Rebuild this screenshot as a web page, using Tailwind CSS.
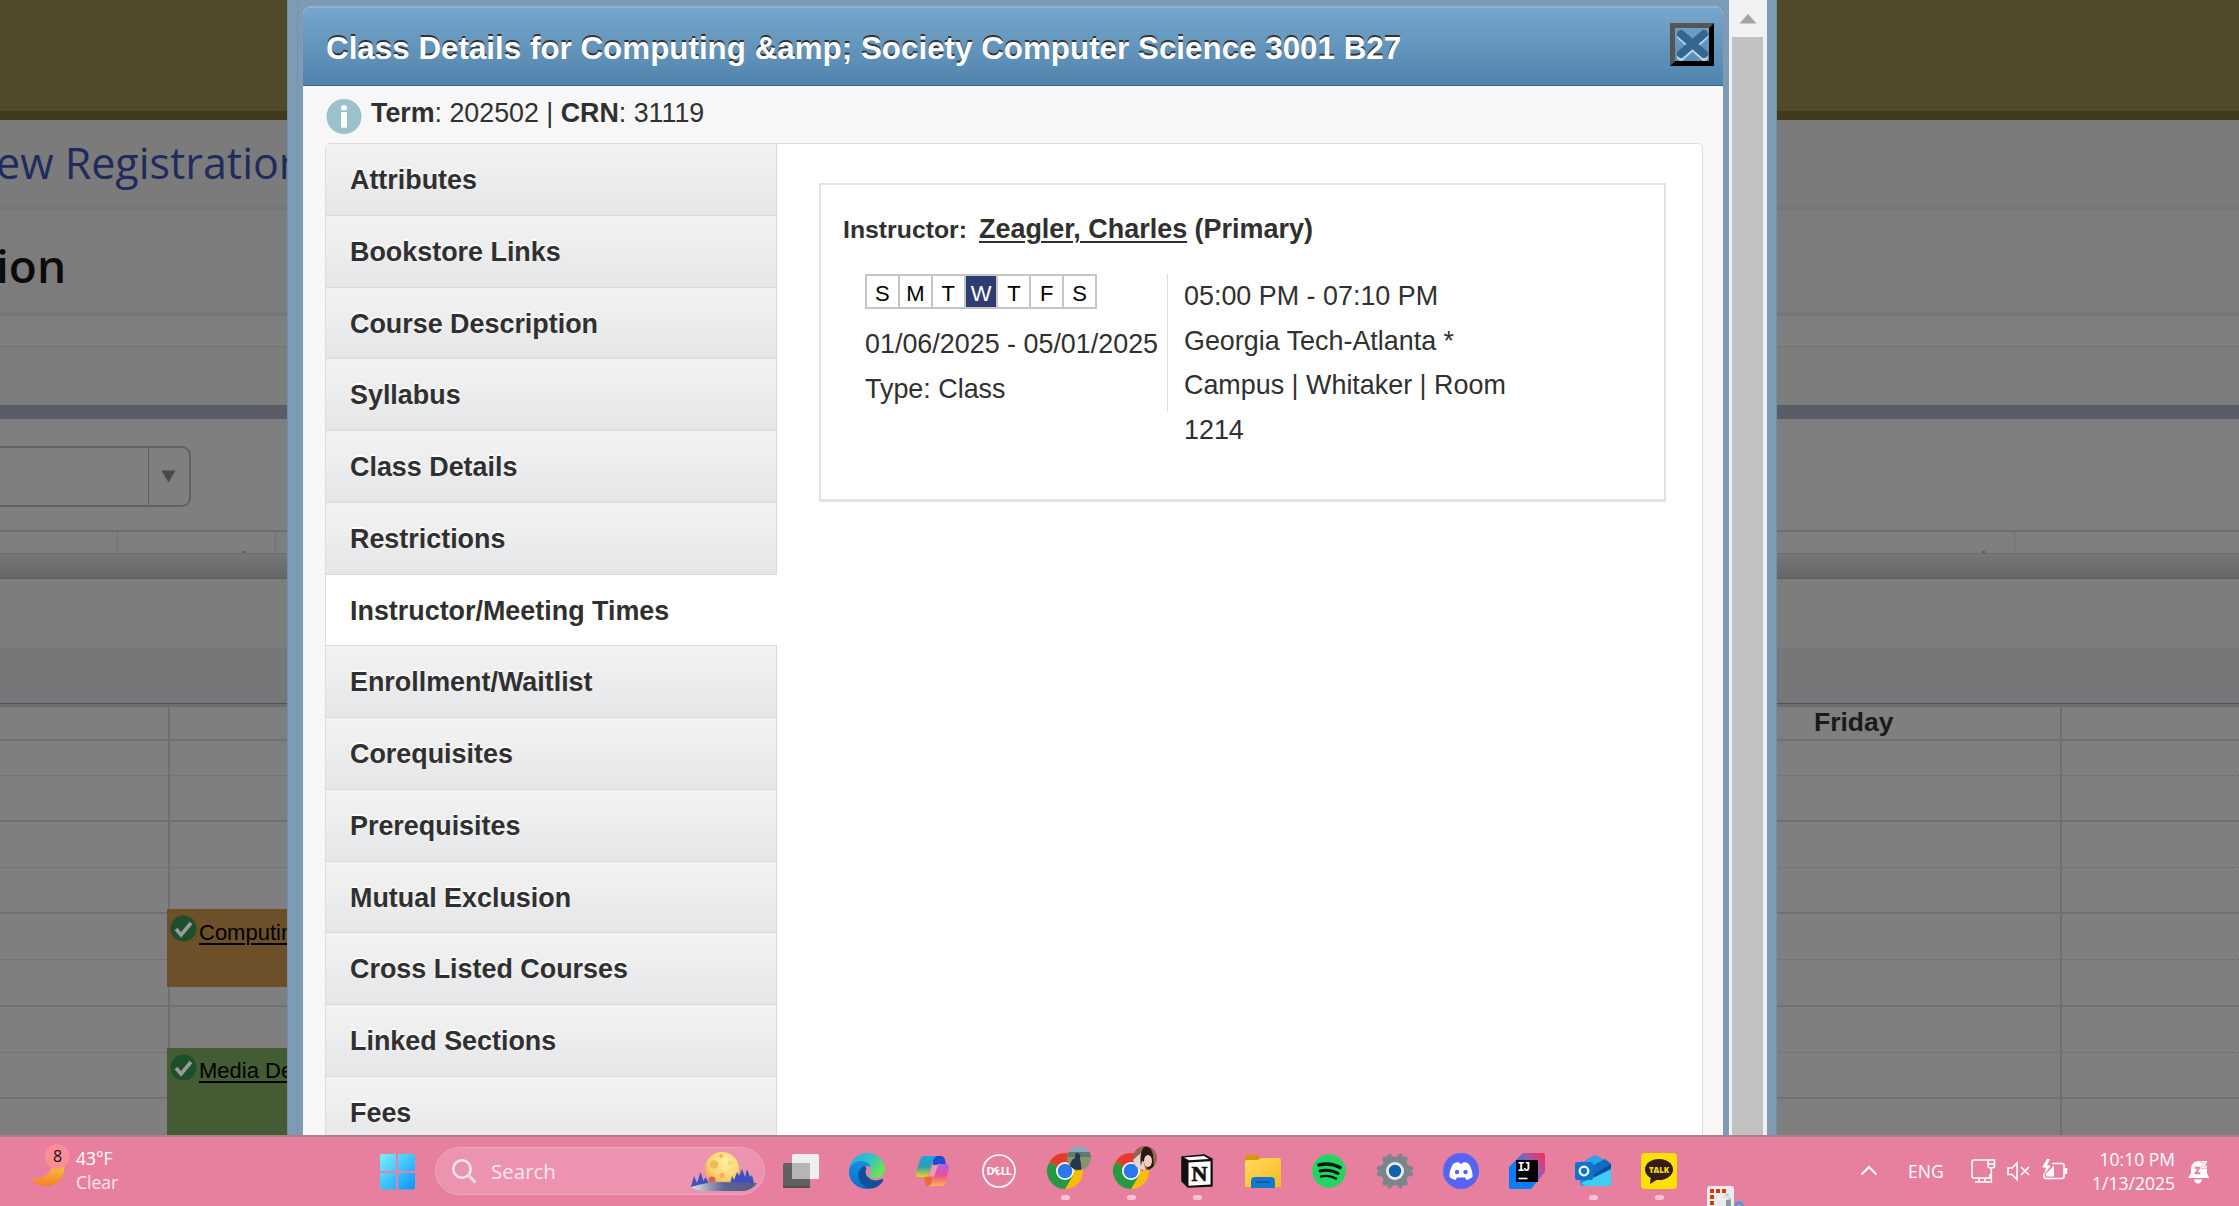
<!DOCTYPE html>
<html lang="en">
<head>
<meta charset="utf-8">
<title>Class Details</title>
<script src="https://cdn.jsdelivr.net/npm/@tailwindcss/browser@4"></script>
</head>
<body class="relative w-[2239px] h-[1206px] overflow-hidden bg-[#7f7f7f] font-['Liberation_Sans',sans-serif] text-[27px] text-[#303030]">

<!-- dimmed registration page -->
<div class="h-[1135px] flex flex-col overflow-hidden">
  <div class="h-[120px] shrink-0 bg-[#50492c] border-b-[9px] border-[#40391b]"></div>
  <div class="h-[90px] shrink-0 bg-[#7b7b7b] border-b-4 border-[#777777] font-['Open_Sans',sans-serif] text-[43px] leading-[86px] text-[#1f2b5c] whitespace-nowrap"><span class="block ml-[-4px]">ew Registration</span></div>
  <div class="h-[106px] shrink-0 bg-[#7c7c7c] border-b-4 border-[#777777] font-['Open_Sans',sans-serif] font-semibold text-[46px] leading-[110px] text-[#0b0b0b] whitespace-nowrap"><span class="block ml-[-4px]">ion</span></div>
  <div class="h-[31px] shrink-0 border-b border-[#747474]"></div>
  <div class="h-[58px] shrink-0 bg-[#7b7e7b]"></div>
  <div class="h-[14px] shrink-0 bg-[#595d66]"></div>
  <div class="h-[111px] shrink-0 pt-[27px]">
    <div class="w-[191px] h-[61px] flex border-2 border-l-0 border-[#616161] rounded-r-[9px]">
      <div class="w-[149px] border-r border-[#616161]"></div>
      <svg class="w-[40px] h-[57px]" viewBox="0 0 40 57"><path d="M12.500 22.500h14l-7 12z" fill="#4a4a4a"/></svg>
    </div>
  </div>
  <div class="h-[24px] shrink-0 grid grid-cols-[118px_158px_1739px_1fr] border-t-2 border-[#6d6d6d] border-b border-b-[#6d6d6d]">
    <div class="border-r border-[#727272]"></div>
    <div class="border-r border-[#727272] flex items-end justify-end pr-[29px]"><i class="w-[3px] h-[2px] bg-[#5c5c5c]"></i></div>
    <div class="border-r border-[#727272] flex items-end justify-end pr-[29px]"><i class="w-[3px] h-[2px] bg-[#5c5c5c]"></i></div>
    <div></div>
  </div>
  <div class="h-[25px] shrink-0 bg-gradient-to-b from-[#777777] to-[#656565] border-b border-[#5c5c5c]"></div>
  <div class="h-[69px] shrink-0 bg-[#7b7e7b]"></div>
  <div class="h-[56px] shrink-0 bg-[#767779] border-b border-[#505154]"></div>
  <div class="h-[3px] shrink-0 bg-[#6e6e6e]"></div>
  <!-- weekly calendar: hour rows end in a solid line, half hours in a dotted one -->
  <div class="shrink-0 grid grid-rows-[34px_35px_46px_46px_46px_46px_47px_46px_46px_46px] [&>div]:grid [&>div]:grid-cols-[170px_1892px_1fr] [&>div:nth-child(odd)]:border-b-2 [&>div]:border-[#707070] [&>div:nth-child(even)]:[border-bottom:1px_dotted_#6a6a6a]">
    <div><span class="border-r-2 border-[#6f6f6f]"></span><span class="border-r-2 border-[#6f6f6f] pl-[1644px] leading-[30px] font-bold text-[26.500px] text-[#1a1a1a]">Friday</span></div>
    <div><span class="border-r-2 border-[#6f6f6f]"></span><span class="border-r-2 border-[#6f6f6f]"></span></div>
    <div><span class="border-r-2 border-[#6f6f6f]"></span><span class="border-r-2 border-[#6f6f6f]"></span></div>
    <div><span class="border-r-2 border-[#6f6f6f]"></span><span class="border-r-2 border-[#6f6f6f]"></span></div>
    <div><span class="border-r-2 border-[#6f6f6f]"></span><span class="border-r-2 border-[#6f6f6f]"></span></div>
    <div><span class="border-r-2 border-[#6f6f6f]"></span><span class="border-r-2 border-[#6f6f6f]"></span></div>
    <div><span class="border-r-2 border-[#6f6f6f]"></span><span class="border-r-2 border-[#6f6f6f]"></span></div>
    <div><span class="border-r-2 border-[#6f6f6f]"></span><span class="border-r-2 border-[#6f6f6f]"></span></div>
    <div><span class="border-r-2 border-[#6f6f6f]"></span><span class="border-r-2 border-[#6f6f6f]"></span></div>
    <div><span class="border-r-2 border-[#6f6f6f]"></span><span class="border-r-2 border-[#6f6f6f]"></span></div>
  </div>
</div>

<!-- calendar events -->
<div class="absolute left-[167px] top-[909px] w-[300px] h-[78px] bg-[#6c5029] flex pl-[3px] text-[22px] text-black leading-[47px]">
  <svg class="w-[27px] h-[27px] mt-[6px] mr-[2px]" viewBox="0 0 27 27"><circle cx="13.500" cy="13.500" r="13" fill="#1d4f2a"/><path d="M6 14l5 6L21 8" fill="none" stroke="#9a9a9a" stroke-width="3.600"/></svg>
  <span class="underline underline-offset-3">Computing</span>
</div>
<div class="absolute left-[167px] top-[1048px] w-[300px] h-[87px] bg-[#445c33] flex pl-[3px] text-[22px] text-black leading-[45px]">
  <svg class="w-[27px] h-[27px] mt-[6px] mr-[2px]" viewBox="0 0 27 27"><circle cx="13.500" cy="13.500" r="13" fill="#1d4f2a"/><path d="M6 14l5 6L21 8" fill="none" stroke="#9a9a9a" stroke-width="3.600"/></svg>
  <span class="underline underline-offset-3">Media Design</span>
</div>

<!-- class details dialog -->
<div class="absolute left-[287px] top-0 w-[1490px] h-[1135px] overflow-hidden bg-[#7e9bb6] flex border-x border-[#728ea8]">
  <div class="w-[10px] shrink-0 border-r border-[#7490aa]"></div>
  <div class="ml-[5px] mt-[6px] w-[1420px] h-[1129px] shrink-0 bg-[#f7f7f7] rounded-t-[9px] overflow-hidden">
    <div class="h-[80px] flex justify-between pl-[23px] pr-[9px] bg-gradient-to-b from-[#77a6cb] to-[#5084ad] border-t-2 border-[#8bb3d2] border-b border-b-[#3f627f]">
      <h1 class="font-bold text-[31.370px] leading-[82px] text-white whitespace-nowrap [text-shadow:0_-2px_0_#333]">Class Details for Computing &amp;amp; Society Computer Science 3001 B27</h1>
      <svg class="w-[44px] h-[43px] mt-[15px]" viewBox="0 0 44 43"><g fill="none" stroke-linecap="round"><path d="M11 13.500L34 34M34 13.500L11 34" stroke="#b9d7ee" stroke-width="7.500"/><path d="M11 11L34 31M34 11L11 31" stroke="#34678f" stroke-width="8"/></g><path d="M0 0h44L39 5H5v33L0 43z" fill="#555"/><path d="M44 0v43H0l5-5h34V5z" fill="#000"/></svg>
    </div>
    <div class="h-[57px] flex pl-[23px] pt-[12px]">
      <svg class="w-[36px] h-[37px]" viewBox="0 0 37 37"><circle cx="18.500" cy="18.500" r="18" fill="#9cc1cb"/><rect x="15.500" y="7" width="6" height="5" rx="2" fill="#fff"/><rect x="15.500" y="14" width="6" height="16" rx="1" fill="#fff"/></svg>
      <p class="ml-[9px] text-[26.800px] leading-[30px]"><b>Term</b>: 202502 | <b>CRN</b>: 31119</p>
    </div>
    <div class="mr-[20px] ml-[22px] h-[1100px] flex bg-white border border-[#dcdcdc] rounded-[5px]">
      <nav class="w-[451px] shrink-0 font-bold text-[26.900px] leading-[72px] [&>a]:block [&>a]:h-[71.750px] [&>a]:pl-[24px] [&>a]:border-b [&>a]:border-r [&>a]:border-[#d9dada] [&>a]:bg-gradient-to-b [&>a]:from-[#f3f3f3] [&>a]:to-[#e5e6e8] [&>a]:[text-shadow:0_-2px_0_#fff]">
        <a>Attributes</a>
        <a>Bookstore Links</a>
        <a>Course Description</a>
        <a>Syllabus</a>
        <a>Class Details</a>
        <a>Restrictions</a>
        <div class="h-[71.750px] pl-[24px] bg-white border-b border-[#d9dada]">Instructor/Meeting Times</div>
        <a>Enrollment/Waitlist</a>
        <a>Corequisites</a>
        <a>Prerequisites</a>
        <a>Mutual Exclusion</a>
        <a>Cross Listed Courses</a>
        <a>Linked Sections</a>
        <a>Fees</a>
      </nav>
      <section class="ml-[42px] mt-[39px] w-[847px] h-[319px] border-2 border-b-3 border-[#e3e3e3]">
        <div class="pl-[22px] pt-[21px] flex items-baseline font-bold leading-[46px] whitespace-nowrap"><span class="text-[24.800px]">Instructor:</span><span class="ml-[12px] text-[26.950px]"><u class="underline-offset-3 decoration-2">Zeagler, Charles</u> (Primary)</span></div>
        <div class="pl-[44px] pt-[21px] flex leading-[44.700px]">
          <div class="w-[303px] h-[138px] border-r border-[#dcdcdc] whitespace-nowrap">
            <div class="w-[232px] h-[35px] flex border-2 border-[#c6c6c6] text-[22px] leading-[35px] text-black text-center [&>span]:flex-1 [&>span]:border-r-2 [&>span]:border-[#c6c6c6]">
              <span>S</span><span>M</span><span>T</span><span class="bg-[#2f3e72] text-white">W</span><span>T</span><span>F</span><b class="flex-1 font-normal">S</b>
            </div>
            <p class="mt-[13px] text-[26.900px]">01/06/2025 - 05/01/2025</p>
            <p class="text-[26.900px]">Type: Class</p>
          </div>
          <div class="ml-[16px] w-[340px] text-[26.900px]">05:00 PM - 07:10 PM<br>Georgia Tech-Atlanta *<br>Campus | Whitaker | Room<br>1214</div>
        </div>
      </section>
    </div>
  </div>
  <div class="ml-[6px] w-[38px] shrink-0 bg-[#f1f1f1] flex flex-col items-center">
    <svg class="w-[38px] h-[37px] shrink-0" viewBox="0 0 38 37"><path d="M10.500 23.500L19 14l8.500 9.500z" fill="#a3a3a3"/></svg>
    <div class="w-[31px] flex-1 bg-[#c1c1c1] mr-[1px]"></div>
  </div>
</div>

<!-- taskbar -->
<footer class="h-[71px] bg-[#e7809f] border-t-2 border-[#b67a8d] flex overflow-hidden font-['Open_Sans',sans-serif] text-white">
  <div class="w-[364px] shrink-0 flex">
    <svg class="w-[76px] h-[69px] shrink-0" viewBox="0 2 76 69"><defs><linearGradient id="mn" x2="0" y2="1"><stop stop-color="#f8c64a"/><stop offset="1" stop-color="#f57f1f"/></linearGradient></defs><path d="M31 43c9 3 19-2 22-14h11c2 12-6 22-17 22-8 0-14-4-16-8z" fill="url(#mn)"/><circle cx="57" cy="21.500" r="12.300" fill="#fd8e97"/><text x="57.500" y="27" text-anchor="middle" font-size="16" fill="#111">8</text></svg>
    <div class="pt-[9px] text-[17.500px] leading-[24px]"><p>43°F</p><p class="text-white/80">Clear</p></div>
  </div>
  <svg class="w-[71px] h-[69px] shrink-0" viewBox="364 1137 71 69"><defs><linearGradient id="w" gradientUnits="userSpaceOnUse" x1="380" y1="1154" x2="415" y2="1189"><stop stop-color="#7bf0ff"/><stop offset="1" stop-color="#0796ff"/></linearGradient></defs><path d="M381.500 1154H396v17h-16v-15.500zM398 1154h15.500l1.500 1.500V1171h-17zM380 1173h16v16.500h-14.500l-1.500-1.500zM398 1173h17v15l-1.500 1.500H398z" fill="url(#w)"/></svg>
  <div class="w-[330px] h-[48px] mt-[10px] shrink-0 rounded-full bg-[#eb93af] border border-[#efa5bb] flex items-center">
    <svg class="w-[55px] h-[46px]" viewBox="0 0 55 46"><circle cx="26" cy="21" r="8.700" fill="none" stroke="#f0e9ec" stroke-width="2.500"/><path d="M32.500 27.500l6 6" stroke="#e3dade" stroke-width="3.200" stroke-linecap="round"/></svg>
    <span class="text-[20.500px] text-[#fde7ee] flex-1">Search</span>
    <svg class="w-[76px] h-[46px]" viewBox="688 1148 76 46"><defs><radialGradient id="mo" cx=".6" cy=".3" r=".8"><stop stop-color="#fff0a0"/><stop offset=".6" stop-color="#fbd26c"/><stop offset="1" stop-color="#f08a50"/></radialGradient><linearGradient id="ld"><stop stop-color="#e6e2df"/><stop offset=".5" stop-color="#5a6496"/><stop offset="1" stop-color="#56598a"/></linearGradient></defs><circle cx="722" cy="1169" r="17" fill="url(#mo)"/><g fill="#eebb58"><circle cx="714" cy="1164.500" r="4.200"/><circle cx="721" cy="1156" r="2"/><circle cx="730" cy="1163" r="2.600" fill="#f6d77c"/><circle cx="722" cy="1175.500" r="2.800" fill="#f5b066"/><circle cx="712" cy="1180" r="3.500" fill="#d9625c"/></g><path d="M691 1187l3-11 3 7 3.500-11 3 9 2-4 4 8v4z" fill="#3e4fc0"/><path d="M730 1184l2-8 2 4 3-8 2 4 3-7 3 8 2-8 3 8 2-2 2 8z" fill="#3e4fc0"/><path d="M691 1187q16-5 30-5l36 1q-4 6-12 8h-42q-8-1-12-4z" fill="url(#ld)"/></svg>
  </div>
  <div class="ml-[3px] flex shrink-0 [&>svg]:w-[66px] [&>svg]:h-[69px]">
    <!-- task view -->
    <svg viewBox="0 2 66 69"><rect x="15" y="28" width="27" height="25" rx="1.500" fill="#616161"/><rect x="24" y="19" width="27" height="25" rx="1.500" fill="#efefef"/><path d="M24 28h18v16H26q-2 0-2-2z" fill="#b5b5b5"/><path d="M15 52h27" stroke="#3d3d3d"/></svg>
    <!-- edge -->
    <svg viewBox="0 2 66 69"><defs><linearGradient id="e1" y2=".5"><stop stop-color="#2aa8e0"/><stop offset=".55" stop-color="#2fc3c6"/><stop offset="1" stop-color="#6be05a"/></linearGradient><linearGradient id="e2" x2="0" y2="1"><stop stop-color="#1390dc"/><stop offset="1" stop-color="#0a6fd0"/></linearGradient></defs><path d="M15 34C17 24 24 18 33 18c10 0 18 7 18 16 0 6-4 9-9 9-4 0-7-1-7-3 1-1 2-3 2-5 0-5-5-8-10-8-6 0-11 4-12 9z" fill="url(#e1)"/><path d="M15 37c0-7 5-11 12-11 5 0 9 3 10 6-7-3-11 2-11 7 0 8 4 12 10 15-12 1-21-7-21-17z" fill="url(#e2)"/><path d="M30 31c-5 3-7 8-5 13 3 8 10 11 15 9 4-1 7-4 9-7 1-1 0-2-1-2-5 2-10 2-13-1-3-2-4-5-3-8q1-4-2-4z" fill="#104f9c"/></svg>
    <!-- copilot -->
    <svg viewBox="0 2 66 69"><defs><linearGradient id="c1" x2="0" y2="1"><stop stop-color="#18a5e8"/><stop offset=".5" stop-color="#2a9fb0"/><stop offset="1" stop-color="#f2d21c"/></linearGradient><linearGradient id="c2" x2="0" y2="1"><stop stop-color="#a763ee"/><stop offset=".5" stop-color="#ee4f92"/><stop offset="1" stop-color="#ffb24a"/></linearGradient></defs><path d="M33 21h8q3 0 4 4l1 4h-8l-5 4z" fill="#1e4bd0"/><path d="M25 21h12q-3 1-4 5l-4 12q-1 4-5 4h-5q-4 0-3-4l4-13q1-4 5-4z" fill="url(#c1)"/><path d="M41 51H27q5-1 6-5l4-13q1-4 5-4h4q4 0 3 4l-3 14q-1 4-5 4z" fill="url(#c2)"/><path d="M24 42h9l-2 6q-1 3-4 3-2-1-2-4z" fill="#f06a34"/><path d="M33 30h5l-4 11h-5z" fill="#f09ab8"/></svg>
    <!-- dell -->
    <svg viewBox="0 2 66 69"><circle cx="33" cy="36" r="16" fill="none" stroke="#fff" stroke-width="1.700"/><g fill="#fff" font-family="Open Sans" font-weight="700" font-size="11"><text x="20.500" y="40">D</text><text x="28.200" y="40.300" transform="rotate(-25 31 36)">E</text><text x="34.700" y="40">L</text><text x="39.700" y="40">L</text></g></svg>
    <!-- chrome -->
    <svg viewBox="0 2 66 69"><circle cx="33" cy="36" r="18" fill="#fbbc05"/><path d="M33 36L17.400 27A18 18 0 0 1 48.600 27z" fill="#e33b2e"/><path d="M33 36L17.400 27A18 18 0 0 0 33 54l8-13.500z" fill="#279847"/><path d="M33 27h15.600L45 36z" fill="#e33b2e"/><circle cx="33" cy="36" r="9" fill="#fff"/><circle cx="33" cy="36" r="7.300" fill="#2a78ea"/><clipPath id="av1"><circle cx="47" cy="23" r="12"/></clipPath><g clip-path="url(#av1)"><path fill="#8fa7bd" d="M35 11h24v9H35z"/><path fill="#5d7a70" d="M35 17h24v5H35z"/><path fill="#87966a" d="M35 22h24v14H35z"/><path fill="#27374e" d="M38 36q-1-11 5-13 0-6 3-5 3 1 2 6 2 8 1 13z"/></g><rect x="29" y="60" width="9" height="5" rx="2.500" fill="#f6c3d2"/></svg>
    <!-- chrome, second profile -->
    <svg viewBox="0 2 66 69"><circle cx="33" cy="36" r="18" fill="#fbbc05"/><path d="M33 36L17.400 27A18 18 0 0 1 48.600 27z" fill="#e33b2e"/><path d="M33 36L17.400 27A18 18 0 0 0 33 54l8-13.500z" fill="#279847"/><path d="M33 27h15.600L45 36z" fill="#e33b2e"/><circle cx="33" cy="36" r="9" fill="#fff"/><circle cx="33" cy="36" r="7.300" fill="#2a78ea"/><clipPath id="av2"><circle cx="47" cy="23" r="12"/></clipPath><g clip-path="url(#av2)"><path fill="#9a6350" d="M35 11h24v25H35z"/><path fill="#e6d5cf" d="M34 26l9-8 5 18H36z"/><path fill="#2b1915" d="M46 12q7-2 9 8l1 13-6 3-2-9-4-1-1 5q-2-12 3-19z"/><ellipse cx="50" cy="26" rx="4" ry="6" fill="#f0cfc0"/></g><rect x="29" y="60" width="9" height="5" rx="2.500" fill="#f6c3d2"/></svg>
    <!-- notion -->
    <svg viewBox="0 2 66 69"><path d="M18 22l22-2 8 4v27l-24 1-6-6z" fill="#111" stroke="#111" stroke-width="1.500" stroke-linejoin="round"/><path d="M20 22.500l20-1.500 5 3-20 1.200z" fill="#fff"/><path d="M24.500 27.500l22-1.200V49.500l-22 1.200z" fill="#fff"/><text x="35.500" y="46" text-anchor="middle" font-family="Liberation Serif" font-weight="700" font-size="22" fill="#111" stroke="#111" stroke-width=".7">N</text><rect x="29" y="60" width="9" height="5" rx="2.500" fill="#f6c3d2"/></svg>
    <!-- explorer -->
    <svg viewBox="0 2 66 69"><defs><linearGradient id="f" x2="1" y2="1"><stop stop-color="#ffdb62"/><stop offset="1" stop-color="#f8b91d"/></linearGradient></defs><path d="M15 22q0-2 2-2h9q2 0 4 3h19q2 0 2 2v8H15z" fill="#dc9604"/><path d="M15 27q0-2 2-2h11l3-2h18q2 0 2 2v27H15z" fill="url(#f)"/><path d="M21 53v-7q0-4 4-4h16q4 0 4 4v7z" fill="#1479cc"/><path d="M26 47h14" stroke="#0b569c" stroke-width="1.500"/></svg>
    <!-- spotify -->
    <svg viewBox="0 2 66 69"><circle cx="33" cy="36" r="16.700" fill="#20d660"/><g fill="none" stroke="#141414" stroke-linecap="round"><path d="M23 30q11-3 21 2.500" stroke-width="3.600"/><path d="M24 36q10-2.500 18 2.500" stroke-width="3"/><path d="M25 41.500q8-2 15 2" stroke-width="2.400"/></g></svg>
    <!-- settings -->
    <svg viewBox="0 2 66 69"><g fill="#7b858c"><circle cx="33" cy="36" r="14"/><path d="M27 24l1.500-6h3l1.500 2 1.500-2h3l1.500 6z" transform="rotate(30 33 36)"/><path d="M27 24l1.500-6h3l1.500 2 1.500-2h3l1.500 6z" transform="rotate(90 33 36)"/><path d="M27 24l1.500-6h3l1.500 2 1.500-2h3l1.500 6z" transform="rotate(150 33 36)"/><path d="M27 24l1.500-6h3l1.500 2 1.500-2h3l1.500 6z" transform="rotate(210 33 36)"/><path d="M27 24l1.500-6h3l1.500 2 1.500-2h3l1.500 6z" transform="rotate(270 33 36)"/><path d="M27 24l1.500-6h3l1.500 2 1.500-2h3l1.500 6z" transform="rotate(330 33 36)"/></g><circle cx="33" cy="36" r="9" fill="#e9eaec"/><circle cx="33" cy="36" r="6.200" fill="#0f62ad"/></svg>
    <!-- discord -->
    <svg viewBox="0 2 66 69"><circle cx="33" cy="36" r="18" fill="#5663f5"/><path d="M25 29q3-2 5.500-2l1 1.500h3l1-1.500q3 0 5.500 2 4 7 3.500 13-3 2.500-6 3l-1.500-2.500h-8L27.500 45q-3-.5-6-3Q21 36 25 29z" fill="#fff"/><circle cx="29" cy="37" r="2.200" fill="#5663f5"/><circle cx="37.500" cy="37" r="2.200" fill="#5663f5"/></svg>
    <!-- intellij -->
    <svg viewBox="0 2 66 69"><defs><linearGradient id="ij" x1="0" y1=".8" x2="1" y2="0"><stop offset=".35" stop-color="#087cfa"/><stop offset=".65" stop-color="#a05aa8"/><stop offset="1" stop-color="#fe2857"/></linearGradient></defs><path d="M29 18h20q2 0 2 2v17L37 54H17q-2 0-2-2V32z" fill="url(#ij)"/><rect x="22" y="25" width="22" height="22" fill="#000"/><text x="23.500" y="36" font-family="Liberation Mono" font-weight="700" font-size="12" fill="#fff" letter-spacing="-1.500">IJ</text><path d="M24.500 43.500h9" stroke="#fff" stroke-width="1.600"/></svg>
    <!-- outlook -->
    <svg viewBox="0 2 66 69"><path d="M20 29l13-8q2-1 4 0l14 8v20q0 2-3 2H24q-4 0-4-4z" fill="#1490df"/><path d="M24 27l10-6.500 4 1L48 28l-14 8z" fill="#28a8ea"/><path d="M30 32l15-8 6 5-17 12z" fill="#0f6cc0"/><path d="M33 40l18-11v6L36 45z" fill="#0a4ba0"/><path d="M51 34v14q0 3-3 3H26q-3 0-5-3l12-5z" fill="#3dcdf5"/><rect x="15" y="27" width="18" height="18" rx="2" fill="#0f73cf"/><circle cx="24" cy="36" r="4.300" fill="none" stroke="#fff" stroke-width="2.300"/><rect x="29" y="60" width="9" height="5" rx="2.500" fill="#f6c3d2"/></svg>
    <!-- kakaotalk -->
    <svg viewBox="0 2 66 69"><rect x="15" y="18" width="36" height="36" rx="4" fill="#fae100"/><ellipse cx="33" cy="34.500" rx="14" ry="10.500" fill="#371c1d"/><path d="M25 41l-1 8 8-5z" fill="#371c1d"/><text x="33" y="38" text-anchor="middle" font-weight="800" font-size="9.500" fill="#fae100" textLength="20" lengthAdjust="spacingAndGlyphs">TALK</text><rect x="29" y="60" width="9" height="5" rx="2.500" fill="#f6c3d2"/></svg>
    <!-- snipping tool, rising from the edge -->
    <svg viewBox="0 2 66 69"><rect x="15" y="51" width="27" height="27" rx="3" fill="#e9ecee"/><path d="M35 59q4 0 4 12h-5v-8h-7z" fill="#8d979c"/><g fill="#d83b01"><path d="M18 54h4v4h-4zM24 54h4v4h-4zM30 54h4v4h-4zM18 60h4v4h-4zM18 66h4v4h-4z"/></g><rect x="26" y="60" width="12" height="5" rx="2" fill="#f6f3f4" opacity=".8"/><circle cx="47" cy="71" r="3.500" fill="none" stroke="#30a0e8" stroke-width="2.500"/></svg>
  </div>
  <div class="flex-1"></div>
  <div class="flex shrink-0 items-center w-[393px]">
    <svg class="w-[62px] h-[69px]" viewBox="1846 1137 62 69"><path d="M1861.500 1174.500l7.500-7.500 7.500 7.500" fill="none" stroke="#fff" stroke-width="2"/></svg>
    <span class="w-[58px] text-[17.500px]">ENG</span>
    <svg class="w-[106px] h-[69px]" viewBox="1966 1137 106 69"><g fill="none" stroke="#fff" stroke-width="1.600"><path d="M1987 1160h-13q-2 0-2 2v14q0 2 2 2h16v-4M1979 1178v4M1985 1178v4M1975 1182h15"/><path d="M1988 1160h6.500v6q0 2-3.200 2t-3.300-2zM1991.300 1168v15M1988 1164h6"/><path d="M2008 1168h4l5-5v16.500l-5-5h-4zM2021 1167l8 8M2029 1167l-8 8"/><path d="M2052 1163.500h10q2 0 2 2v11q0 2-2 2h-16q-2 0-2-2v-3"/><path d="M2066 1168v6" stroke-width="2.500"/></g><path d="M2047 1159l-5 8.500h4l-2 7 7-9h-4l3-6.500zM2046 1176.500v-3l8-8v11z" fill="#fff"/></svg>
    <div class="w-[103px] text-right text-[17.500px] leading-[24px] pb-[2px]"><p>10:10 PM</p><p>1/13/2025</p></div>
    <svg class="w-[36px] h-[69px]" viewBox="2175 1137 36 69"><path d="M2188 1178l3-5v-5q1-7 8-7t8 7v5l2 5zM2194 1179.500h8q-1 4-4 4t-4-4z" fill="#fff"/><g font-weight="700" fill="#fff" stroke="#e7809f" stroke-width=".4"><text x="2194.500" y="1174" font-size="12" fill="#e7809f">z</text><text x="2201" y="1168" font-size="13" stroke-width="1" paint-order="stroke">z</text></g></svg>
  </div>
</footer>
</body>
</html>
